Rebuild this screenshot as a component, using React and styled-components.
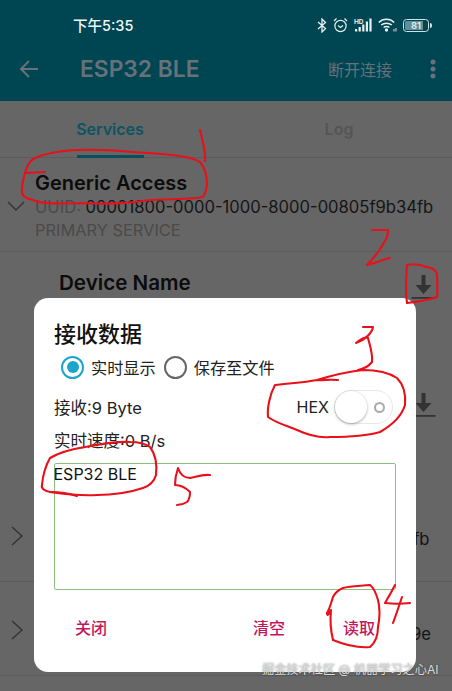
import React from 'react'
import styled, { createGlobalStyle } from 'styled-components'

const GlobalStyle = createGlobalStyle`
  html, body { margin: 0; padding: 0; background: #666666; }
  * { box-sizing: border-box; }
  body { font-family: Inter, "Noto Sans CJK SC", sans-serif; }
`

const Screen = styled.div`
  position: relative;
  width: 452px;
  height: 691px;
  overflow: hidden;
  background: #666666;
`

const Header = styled.header`
  height: 101px;
  background: #004552;
  display: flex;
  flex-direction: column;
`

const StatusBar = styled.div`
  height: 50px;
  padding: 0 21px 0 73px;
  display: flex;
  align-items: center;
  justify-content: space-between;
  color: #f2f6f6;
`

const Time = styled.span`
  font-size: 14.5px;
  font-weight: 500;
  margin-bottom: 1px;
`

const StatusIcons = styled.div`
  display: flex;
  align-items: center;
  gap: 6px;
`

const BatteryShell = styled.div`
  position: relative;
  width: 26px;
  height: 13px;
  margin-right: 2px;
  border: 1.3px solid #cfe3e6;
  border-radius: 3.5px;
  font-size: 9.5px;
  line-height: 10.5px;
  text-align: center;
  font-weight: 600;
  color: #e6f0f1;
  background: linear-gradient(90deg, #5f8f99 81%, transparent 81%);
  background-clip: content-box;
  padding: 1px;

  &::after {
    content: '';
    position: absolute;
    right: -4px;
    top: 3px;
    width: 2px;
    height: 5px;
    border-radius: 0 2px 2px 0;
    background: #cfe3e6;
  }
`

const Toolbar = styled.div`
  flex: 1;
  padding: 0 16px 14px 19px;
  display: flex;
  align-items: center;
  color: #66727a;
`

const Title = styled.h1`
  margin: 0 0 0 41px;
  flex: 1;
  font-size: 22.8px;
  font-weight: 600;
`

const Disconnect = styled.span`
  font-size: 16px;
  margin-right: 38px;
`

const Tabs = styled.nav`
  height: 57px;
  display: flex;
  border-bottom: 1px solid #5b5b5b;
`

const Tab = styled.div`
  position: relative;
  width: 226px;
  display: flex;
  justify-content: center;
  align-items: center;
  font-size: 16px;
  font-weight: 600;
  color: ${p => (p.$active ? '#0a5560' : '#555555')};
  padding-right: ${p => (p.$active ? 6 : 0)}px;

  ${p => p.$active && `
    &::after {
      content: '';
      position: absolute;
      bottom: -1px;
      left: 77px;
      width: 67px;
      height: 3px;
      background: #0a4f5c;
    }
  `}
`

const Service = styled.section`
  position: relative;
  height: ${p => p.$height}px;
  padding: ${p => p.$top}px 0 0 35px;
  border-bottom: 1px solid #5b5b5b;
`

const Chevron = styled.svg`
  position: absolute;
  left: 6px;
  top: ${p => p.$top}px;
  width: 22px;
  height: 22px;
  fill: none;
  stroke: #333333;
  stroke-width: 1.4;
`

const ServiceName = styled.div`
  font-size: 20px;
  font-weight: 600;
  line-height: 24px;
  color: #0c0c0c;
`

const CharacteristicName = styled(ServiceName)`
  font-size: 20.6px;
`

const Uuid = styled.div`
  margin-top: 1px;
  font-size: 16.6px;
  line-height: 23px;
  white-space: nowrap;
  color: #141414;

  span { color: #4a4a4a; }
`

const Kind = styled.div`
  font-size: 16.4px;
  line-height: 23px;
  color: #4a4a4a;
`

const Characteristic = styled.div`
  position: relative;
  height: ${p => p.$height}px;
  padding: 19px 0 0 59px;
`

const ReadIcon = styled.svg`
  position: absolute;
  right: 16px;
  top: ${p => p.$top}px;
  width: 25px;
  height: 25px;
  fill: #333333;
`

const Dialog = styled.div`
  position: absolute;
  left: 34px;
  top: 298px;
  width: 382px;
  height: 374px;
  padding: 22px 20px 0;
  background: #ffffff;
  border-radius: 14px;
  display: flex;
  flex-direction: column;
`

const DialogTitle = styled.h2`
  margin: 0;
  font-size: 22px;
  line-height: 28px;
  font-weight: 500;
  color: #111111;
`

const RadioRow = styled.div`
  margin: 7px 0 0 7px;
  display: flex;
  align-items: center;
`

const Radio = styled.span`
  width: 23px;
  height: 23px;
  border-radius: 50%;
  border: 2.5px solid ${p => (p.$checked ? '#1aa6cc' : '#666666')};
  display: flex;
  align-items: center;
  justify-content: center;

  &::after {
    content: '';
    width: 12px;
    height: 12px;
    border-radius: 50%;
    background: ${p => (p.$checked ? '#1aa6cc' : 'transparent')};
  }
`

const RadioLabel = styled.span`
  margin: 0 8px 0 7px;
  font-size: 16.2px;
  color: #222222;
`

const HexRow = styled.div`
  margin-top: 11px;
  height: 34px;
  display: flex;
  align-items: center;
  justify-content: space-between;
  font-size: 16.5px;
  color: #222222;
`

const HexGroup = styled.div`
  display: flex;
  align-items: center;
  gap: 5px;
  margin-right: 3px;
  font-size: 16px;
`

const Switch = styled.div`
  position: relative;
  width: 59px;
  height: 34px;
  border: 1px solid #e8e8e8;
  border-radius: 17px;
  display: flex;
  align-items: center;
  justify-content: flex-end;
  padding-right: 7px;

  &::before {
    content: '';
    position: absolute;
    left: 0;
    top: 0;
    width: 32px;
    height: 32px;
    border-radius: 50%;
    background: #ffffff;
    box-shadow: 0 1px 3px rgba(0, 0, 0, 0.35);
  }
`

const SwitchDot = styled.span`
  width: 11px;
  height: 11px;
  border-radius: 50%;
  border: 2px solid #aaaaaa;
`

const Speed = styled.div`
  margin-top: 5px;
  font-size: 16.5px;
  line-height: 24px;
  color: #222222;
`

const Output = styled.div`
  margin-top: 10px;
  height: 127px;
  border: 1.5px solid #8cc07f;
  border-radius: 2px;
  font-size: 16px;
  line-height: 21px;
  text-indent: -1.5px;
  color: #111111;
`

const Actions = styled.div`
  margin-top: 25px;
  padding: 0 21px;
  display: flex;
  align-items: center;
  font-size: 16px;
  font-weight: 500;
  color: #c2185b;

  span:first-child { margin-right: auto; }
  span:last-child { margin-left: 58px; }
`

const Scribbles = styled.svg`
  position: absolute;
  inset: 0;
  width: 452px;
  height: 691px;
  fill: none;
  stroke: #e8101a;
  stroke-width: 2.1;
  stroke-linecap: round;
  stroke-linejoin: round;
  pointer-events: none;
`

const Watermark = styled.div`
  position: absolute;
  left: 262px;
  top: 662px;
  font-size: 12.2px;
  line-height: 16px;
  white-space: nowrap;
  color: #dcdcdc;
  text-shadow: 0 0 2px rgba(0, 0, 0, 0.5);
`

const ChevronRight = ({ top }) => (
  <Chevron $top={top} viewBox="0 0 22 22"><path d="M6 2 L16 11 L6 20" /></Chevron>
)

const ChevronDown = ({ top }) => (
  <Chevron $top={top} viewBox="0 0 22 22"><path d="M2 6 L10 14 L18 6" /></Chevron>
)

const Download = ({ top }) => (
  <ReadIcon $top={top} viewBox="0 0 25 25">
    <path d="M10.5 1 H14.5 V11 H20.5 L12.5 20 L4.5 11 H10.5 Z" />
    <rect x="0.5" y="23" width="24" height="1.8" />
  </ReadIcon>
)

const strokes = [
  'M25 173 L45 172',
  'M57 152 C80 148 110 150 133 152 C160 154 190 155 200 162 C208 172 209 188 203 197 C185 200 165 199 150 200 C125 204 100 204 83 203 C60 204 40 204 33 200 C24 198 21 195 22 190 C22 182 24 176 26 170 C28 164 30 160 37 157 C43 155 50 153 57 152',
  'M200 130 C202 140 206 150 205 161',
  'M372 230 L388 230 C388 236 387 238 385 241 C380 250 372 260 367 265 C375 263 382 260 390 258',
  'M407 265 C415 263 422 265 427 267 C433 268 436 270 437 274 C437 282 438 290 437 297 C428 300 416 302 407 303 C405 290 406 278 407 265',
  'M363 327 L373 327 C372 333 365 340 356 343 C362 338 366 337 368 338 C370 346 373 354 372 362 C368 367 364 369 358 370',
  'M338 380 C325 379 318 381 317 380 C302 383 288 383 275 385 C270 394 267 408 268 417 C278 424 288 426 297 430 C310 436 320 438 330 437 C350 437 366 436 380 432 C394 424 402 415 405 405 C406 394 403 384 397 378 C388 372 376 370 363 370 C345 372 330 376 317 380',
  'M85 447 C100 444 116 441 130 442 C138 442 146 444 150 447 C156 455 157 466 156 475 C154 482 149 486 143 488 C128 493 112 495 97 495 C80 496 64 494 50 492 C44 491 41 488 42 485 C43 474 46 465 50 458 C60 452 72 449 85 447',
  'M50 492 C58 492 68 493 77 496',
  'M210 475 C202 474 196 477 190 478 C184 478 180 474 178 468 C176 474 175 480 175 485 C180 485 186 488 190 492 C190 497 189 500 187 502 C184 504 180 505 177 505',
  'M370 585 C360 586 350 586 343 588 C338 590 335 593 333 597 C331 603 330 608 327 613 C327 617 329 614 331 610 C330 620 331 632 333 640 C345 645 358 648 370 647 C376 642 378 634 378 627 C380 617 380 608 378 600 C376 593 374 588 370 585',
  'M395 585 C392 591 388 598 385 603 C393 604 402 604 410 603',
  'M402 597 C399 606 396 615 393 623',
]

export default function App() {
  return (
    <Screen>
      <GlobalStyle />
      <Header>
        <StatusBar>
          <Time>下午5:35</Time>
          <StatusIcons>
            <svg width="10" height="15" viewBox="0 0 10 15" fill="none" stroke="#e6f0f1" strokeWidth="1.3">
              <path d="M1 4 L8.5 10.5 L5 14 V1 L8.5 4.5 L1 11" />
            </svg>
            <svg width="15" height="16" viewBox="0 0 15 16" fill="none" stroke="#e6f0f1" strokeWidth="1.2">
              <circle cx="7.5" cy="9" r="5.6" />
              <path d="M5 8.5 L7.5 10.5 L10 8.5 M1 4 L3.5 1.5 M14 4 L11.5 1.5" />
            </svg>
            <svg width="18" height="14" viewBox="0 0 18 14" fill="#e6f0f1">
              <text x="0" y="5.5" fontSize="6.5" fontWeight="700" fontFamily="Inter, sans-serif">HD</text>
              <rect x="1" y="11" width="2.2" height="2.5" />
              <rect x="4.6" y="9" width="2.2" height="4.5" />
              <rect x="8.2" y="6.5" width="2.2" height="7" />
              <rect x="11.8" y="3.5" width="2.2" height="10" />
              <rect x="15.4" y="0.5" width="2.2" height="13" />
            </svg>
            <svg width="19" height="14" viewBox="0 0 19 14" fill="none" stroke="#e6f0f1" strokeWidth="1.5">
              <path d="M0.8 4.5 C5 0.3 12 0.3 16.2 4.5 M3.2 7 C6 4.5 11 4.5 13.8 7 M5.6 9.5 C7 8.3 10 8.3 11.4 9.5" />
              <circle cx="8.5" cy="12" r="0.9" fill="#e6f0f1" />
              <path d="M16 13.5 V11 M18 13.5 V10" strokeWidth="0.9" />
            </svg>
            <BatteryShell>81</BatteryShell>
          </StatusIcons>
        </StatusBar>
        <Toolbar>
          <svg width="20" height="20" viewBox="0 0 20 20" fill="none" stroke="#66727a" strokeWidth="2">
            <path d="M19 10 H2 M10 2 L2 10 L10 18" />
          </svg>
          <Title>ESP32 BLE</Title>
          <Disconnect>断开连接</Disconnect>
          <svg width="6" height="20" viewBox="0 0 6 20" fill="#66727a">
            <circle cx="3" cy="3" r="2.5" />
            <circle cx="3" cy="10" r="2.5" />
            <circle cx="3" cy="17" r="2.5" />
          </svg>
        </Toolbar>
      </Header>
      <Tabs>
        <Tab $active>Services</Tab>
        <Tab>Log</Tab>
      </Tabs>
      <Service $height={94} $top={13}>
        <ChevronDown top={38} />
        <ServiceName>Generic Access</ServiceName>
        <Uuid><span>UUID: </span>00001800-0000-1000-8000-00805f9b34fb</Uuid>
        <Kind>PRIMARY SERVICE</Kind>
      </Service>
      <Characteristic $height={237}>
        <CharacteristicName>Device Name</CharacteristicName>
        <Download top={22} />
        <Download top={140} />
      </Characteristic>
      <Service $height={93} $top={14}>
        <ChevronRight top={36} />
        <ServiceName>Generic Attribute</ServiceName>
        <Uuid><span>UUID: </span>00001801-0000-1000-8000-00805f9b34fb</Uuid>
      </Service>
      <Service $height={94} $top={16}>
        <ChevronRight top={37} />
        <ServiceName>Unknown Service</ServiceName>
        <Uuid><span>UUID: </span>6e400001-b5a3-f393-e0a9-e50e24dcca9e</Uuid>
      </Service>
      <Dialog>
        <DialogTitle>接收数据</DialogTitle>
        <RadioRow>
          <Radio $checked />
          <RadioLabel>实时显示</RadioLabel>
          <Radio />
          <RadioLabel>保存至文件</RadioLabel>
        </RadioRow>
        <HexRow>
          <span>接收:9 Byte</span>
          <HexGroup>
            HEX
            <Switch><SwitchDot /></Switch>
          </HexGroup>
        </HexRow>
        <Speed>实时速度:0 B/s</Speed>
        <Output>ESP32 BLE</Output>
        <Actions>
          <span>关闭</span>
          <span>清空</span>
          <span>读取</span>
        </Actions>
      </Dialog>
      <Scribbles viewBox="0 0 452 691">
        {strokes.map(d => <path key={d} d={d} />)}
      </Scribbles>
      <Watermark>掘金技术社区 @ 机器学习之心AI</Watermark>
    </Screen>
  )
}
